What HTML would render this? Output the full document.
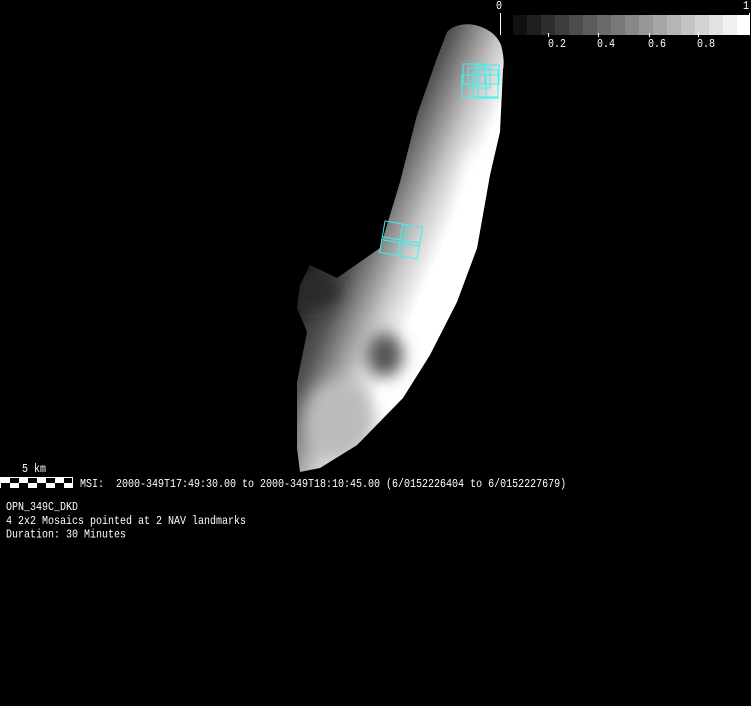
<!DOCTYPE html>
<html><head><style>
html,body{margin:0;padding:0;background:#000;width:751px;height:706px;overflow:hidden}
.t{position:absolute;color:#fff;font-family:"Liberation Mono",monospace;font-size:10px;line-height:14px;white-space:pre;transform-origin:0 0;transform:scaleY(1.15)}
</style></head><body>
<svg width="751" height="706" style="position:absolute;left:0;top:0">
<defs>
<linearGradient id="g" x1="330" y1="200" x2="470" y2="260" gradientUnits="userSpaceOnUse">
<stop offset="0" stop-color="#141414"/><stop offset="0.3" stop-color="#555"/><stop offset="0.6" stop-color="#c8c8c8"/><stop offset="0.8" stop-color="#fff"/><stop offset="1" stop-color="#fff"/>
</linearGradient>
<filter id="b"><feGaussianBlur stdDeviation="8"/></filter>
<clipPath id="c"><path d="M447,32 Q457,22 475,25 Q495,30 501,45 Q505,60 503,70 L500,132 L490,175 L477,248 L457,302 L430,355 L403,398 L357,445 L320,468 L300,472 L297,448 L297,382 L307,332 L297,308 L300,285 L310,265 L337,278 L380,248 L400,182 L417,115 L437,58 Z"/></clipPath>
</defs>
<g clip-path="url(#c)">
<rect x="280" y="0" width="240" height="480" fill="url(#g)"/>
<g filter="url(#b)">
<ellipse cx="340" cy="420" rx="35" ry="40" fill="#bbb"/>
<ellipse cx="385" cy="355" rx="18" ry="22" fill="#555"/>
<ellipse cx="315" cy="290" rx="25" ry="18" fill="#2a2a2a"/>
<ellipse cx="475" cy="230" rx="16" ry="80" fill="#fff"/>
</g>
</g>
<g fill="none" stroke="#40f0f0" stroke-width="1">
<rect x="463" y="64" width="22" height="20"/><rect x="468" y="68" width="22" height="20"/>
<rect x="476" y="65" width="23" height="19"/><rect x="462" y="75" width="24" height="22"/>
<rect x="473" y="75" width="25" height="22"/><rect x="478" y="70" width="20" height="28"/>
<g transform="rotate(10 401 240)">
<rect x="382" y="224" width="38" height="32"/>
<line x1="400" y1="224" x2="400" y2="256"/><line x1="382" y1="240" x2="420" y2="240"/>
<line x1="404" y1="224" x2="404" y2="256"/><line x1="382" y1="243" x2="420" y2="243"/>
</g>
</g>
<g>
<rect x="513" y="15" width="14" height="20" fill="#111"/><rect x="527" y="15" width="14" height="20" fill="#1f1f1f"/>
<rect x="541" y="15" width="14" height="20" fill="#2e2e2e"/><rect x="555" y="15" width="14" height="20" fill="#3d3d3d"/>
<rect x="569" y="15" width="14" height="20" fill="#4c4c4c"/><rect x="583" y="15" width="14" height="20" fill="#5b5b5b"/>
<rect x="597" y="15" width="14" height="20" fill="#6a6a6a"/><rect x="611" y="15" width="14" height="20" fill="#797979"/>
<rect x="625" y="15" width="14" height="20" fill="#888"/><rect x="639" y="15" width="14" height="20" fill="#979797"/>
<rect x="653" y="15" width="14" height="20" fill="#a6a6a6"/><rect x="667" y="15" width="14" height="20" fill="#b5b5b5"/>
<rect x="681" y="15" width="14" height="20" fill="#c4c4c4"/><rect x="695" y="15" width="14" height="20" fill="#d3d3d3"/>
<rect x="709" y="15" width="14" height="20" fill="#e2e2e2"/><rect x="723" y="15" width="14" height="20" fill="#f0f0f0"/>
<rect x="737" y="15" width="13" height="20" fill="#fff"/>
<line x1="500.5" y1="13" x2="500.5" y2="35" stroke="#fff"/>
<line x1="749.5" y1="13" x2="749.5" y2="35" stroke="#fff"/>
<g stroke="#fff"><line x1="548.5" y1="33" x2="548.5" y2="37"/><line x1="598.5" y1="33" x2="598.5" y2="37"/><line x1="649.5" y1="33" x2="649.5" y2="37"/><line x1="698.5" y1="33" x2="698.5" y2="37"/></g>
</g>
<rect x="0.5" y="477.5" width="72" height="10" fill="#fff" stroke="#fff"/>
<g fill="#000"><rect x="10" y="478" width="9" height="5"/><rect x="28" y="478" width="9" height="5"/><rect x="46" y="478" width="9" height="5"/><rect x="64" y="478" width="8" height="5"/>
<rect x="1" y="483" width="9" height="5"/><rect x="19" y="483" width="9" height="5"/><rect x="37" y="483" width="9" height="5"/><rect x="55" y="483" width="9" height="5"/></g>
</svg>
<div class="t" style="left:496px;top:0px">0</div>
<div class="t" style="left:743px;top:0px">1</div>
<div class="t" style="left:548px;top:38px">0.2</div>
<div class="t" style="left:597px;top:38px">0.4</div>
<div class="t" style="left:648px;top:38px">0.6</div>
<div class="t" style="left:697px;top:38px">0.8</div>
<div class="t" style="left:22px;top:463px">5 km</div>
<div class="t" style="left:80px;top:478px">MSI:  2000-349T17:49:30.00 to 2000-349T18:10:45.00 (6/0152226404 to 6/0152227679)</div>
<div class="t" style="left:6px;top:502px;line-height:12.2px">OPN_349C_DKD
4 2x2 Mosaics pointed at 2 NAV landmarks
Duration: 30 Minutes</div>
</body></html>
